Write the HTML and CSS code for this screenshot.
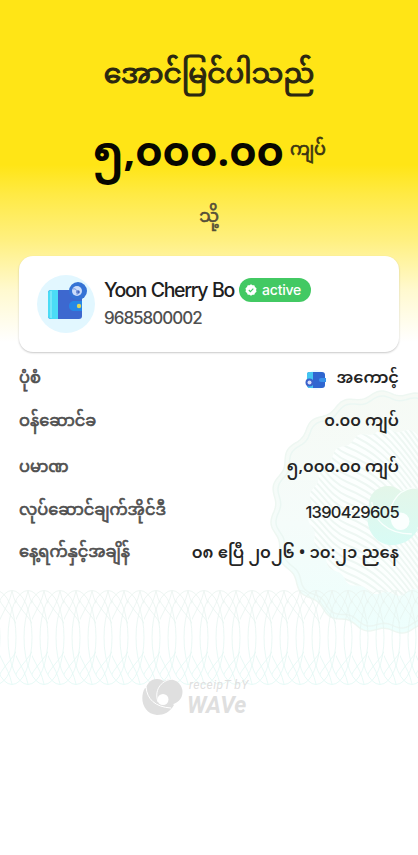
FILE: index.html
```html
<!DOCTYPE html>
<html lang="my">
<head>
<meta charset="utf-8">
<title>Receipt</title>
<link rel="stylesheet" href="styles.css">
</head>
<body>
<main class="receipt">
  <svg class="seal" width="156" height="260" viewBox="0 0 156 260" aria-hidden="true">
    <defs>
      <linearGradient id="sealFill" x1="0" y1="0" x2="0" y2="1"><stop offset="0" stop-color="#f6faf5"/><stop offset=".55" stop-color="#f5fcfa"/><stop offset="1" stop-color="#edfffd"/></linearGradient>
      <linearGradient id="petal" gradientUnits="userSpaceOnUse" x1="0" y1="0" x2="0" y2="37"><stop offset="0" stop-color="#e4f6e9"/><stop offset="1" stop-color="#d8fbf5"/></linearGradient>
      <clipPath id="disc"><path id="discPath"/></clipPath>
    </defs>
    <path id="edge" fill="url(#sealFill)" stroke="#eef7f2" stroke-width="1.5"/>
    <path id="edgeInner" fill="none" stroke="#ebf7f3" stroke-width="1.5"/>
    <g clip-path="url(#disc)"><rect width="156" height="260" fill="#fcfffe"/><g id="waves" fill="none" stroke="#eef7f3" stroke-width="2"></g></g>
    <g transform="translate(105 104) scale(1.6)">
      <g fill="url(#petal)"><circle cx="13" cy="12" r="12"/><path d="M3 10C-3 20 1 36 15 37c7 0 13-3 17-10L20 14Z"/><circle cx="28" cy="14" r="12.500"/></g>
      <path d="M29 1C18 3 12 13 16 24M3 10c1 11 9 20 25 20" fill="none" stroke="#f9fffd" stroke-width=".8"/><circle cx="21" cy="22" r="5.500" fill="#fbfffe"/>
    </g>
  </svg>
  <svg class="lattice" width="418" height="95" aria-hidden="true">
    <defs>
      <linearGradient id="tint" x1="0" y1="0" x2="0" y2="1"><stop offset="0" stop-color="#e9f2ee"/><stop offset="1" stop-color="#e0f8f4"/></linearGradient>
      <pattern id="loops" width="16" height="95" patternUnits="userSpaceOnUse">
        <g fill="none" stroke="url(#tint)" stroke-width=".8">
          <ellipse cx="-20" cy="47.500" rx="20" ry="47"/><ellipse cx="-4" cy="47.500" rx="20" ry="47"/><ellipse cx="12" cy="47.500" rx="20" ry="47"/><ellipse cx="28" cy="47.500" rx="20" ry="47"/>
          <path d="M-4 1C0 20 20 28 20 47.500S0 75 -4 94M12 1C8 20-4 28-4 47.500S8 75 12 94M12 1C16 20 28 28 28 47.500"/>
        </g>
      </pattern>
    </defs>
    <rect width="418" height="95" fill="url(#loops)"/>
  </svg>

  <h1 class="title">အောင်မြင်ပါသည်</h1>
  <div class="total"><span class="sum">၅,၀၀၀.၀၀</span><span class="unit">ကျပ်</span></div>
  <div class="to">သို့</div>

  <section class="card">
    <svg class="avatar" width="58" height="58" viewBox="0 0 58 58" aria-hidden="true">
      <circle cx="29" cy="29" r="29" fill="#e2f7ff"/>
      <rect x="11" y="15" width="34" height="29" rx="3" fill="#3d68cf"/>
      <path d="M14 15h7v29h-7q-3 0-3-3V18q0-3 3-3z" fill="#4bdcf6"/>
      <path d="M14 16v27" stroke="#a1f2fb"/>
      <circle cx="41" cy="16" r="9" fill="#3472d5"/>
      <circle cx="40" cy="16" r="5" fill="#cbdcfa"/><circle cx="41" cy="17" r="1.800" fill="#4265bd"/><path d="M36 14c3-1 5 2 4 6" stroke="#7897df" fill="none"/>
      <path d="M36 26h9v10h-9q-4-1-4-5t4-5z" fill="#2587e7"/>
      <circle cx="42" cy="31" r="2.200" fill="#ddd65a"/>
    </svg>
    <div class="person">
      <div class="name-line"><span class="name">Yoon Cherry Bo</span>
        <span class="badge"><svg width="12" height="12" viewBox="0 0 12 12" aria-hidden="true"><path d="M6 .3 7.500 1.300 9.300 1.300 10 3 11.500 4.200 11.100 6 11.500 7.800 10 9 9.300 10.700 7.500 10.700 6 11.700 4.500 10.700 2.700 10.700 2 9 .5 7.800 .9 6 .5 4.200 2 3 2.700 1.300 4.500 1.300Z" fill="#fff"/><path d="m3.800 6 1.600 1.600L8.300 4.600" fill="none" stroke="#42c963" stroke-width="1.100"/></svg><span class="state">active</span></span>
      </div>
      <div class="phone">9685800002</div>
    </div>
  </section>

  <dl class="details">
    <div class="row r1"><dt>ပုံစံ</dt><dd><svg class="mini" width="22" height="20" viewBox="0 0 22 20" aria-hidden="true"><circle cx="11" cy="10" r="10" fill="#edfaff"/><rect x="2" y="2" width="18" height="16" rx="3" fill="#2f66d0"/><path d="M4 2h4v16H4q-2-1-2-3V4q0-2 2-2z" fill="#43c5f1"/><circle cx="4.500" cy="12.500" r="4" fill="#3c62cb"/><circle cx="4.500" cy="12.500" r="2" fill="#dcdffa"/><path d="M21 8h-5q-2 0-2 2t2 2h5z" fill="#3892ea"/></svg><span>အကောင့်</span></dd></div>
    <div class="row r2"><dt>ဝန်ဆောင်ခ</dt><dd>၀.၀၀ ကျပ်</dd></div>
    <div class="row r3"><dt>ပမာဏ</dt><dd>၅,၀၀၀.၀၀ ကျပ်</dd></div>
    <div class="row r4"><dt>လုပ်ဆောင်ချက်အိုင်ဒီ</dt><dd class="latin">1390429605</dd></div>
    <div class="row r5"><dt>နေ့ရက်နှင့်အချိန်</dt><dd class="date">၀၈ ဧပြီ ၂၀၂၆ • ၁၀:၂၁ ညနေ</dd></div>
  </dl>

  <footer class="brand">
    <svg width="41" height="38" viewBox="0 0 41 38" aria-hidden="true">
      <g fill="#dfdfdf"><circle cx="15" cy="12" r="11"/><path d="M3 10C-3 20 1 36 15 37c7 0 13-3 17-10L20 14Z"/><circle cx="28" cy="14" r="12.500"/></g>
      <path d="M30 1C18 3 12 13 16 24M4 9c1 12 9 20 25 21" fill="none" stroke="#fff"/>
      <circle cx="21" cy="21.500" r="5.500" fill="#fff"/>
    </svg>
    <div class="words"><span class="by">receipT bY</span><span class="wave">WAVe</span></div>
  </footer>
</main>
<script src="script.js"></script>
</body>
</html>
```
FILE: styles.css
```css
* { box-sizing: border-box; }
body { margin: 0; background: #fff; font-family: "Noto Sans Myanmar", "Noto Sans", Inter, sans-serif; color: #242424; }
.receipt { position: relative; height: 855px; overflow: hidden; background: linear-gradient(#ffe516 0, #ffe516 165px, #ffea45 195px, #fff080 240px, #fff9cf 290px, #fff 342px); }
.seal { position: absolute; left: 262px; top: 382px; }
.lattice { position: absolute; left: 0; top: 590px; }
.title, .total, .to, .card, .details, .brand { position: relative; }
.title { margin: 0; padding-top: 55px; height: 124px; text-align: center; font-size: 28px; line-height: 44px; font-weight: 400; -webkit-text-stroke: 1.1px currentColor; color: #2b2710; white-space: nowrap; }
.total { height: 76px; padding-top: 4px; display: flex; justify-content: center; align-items: flex-start; gap: 6px; color: #080700; white-space: nowrap; }
.sum { font-size: 41.200px; line-height: 56px; font-weight: 700; }
.unit { font-size: 17.500px; line-height: 47px; color: #3c3512; font-weight: 400; -webkit-text-stroke: .7px currentColor; }
.to { height: 56px; text-align: center; font-size: 17.500px; line-height: 36px; color: #554f38; -webkit-text-stroke: .6px currentColor; }
.card { margin: 0 19px; height: 96px; border-radius: 14px; background: #fff; box-shadow: 0 1px 2px rgba(0,0,0,.22); display: flex; padding: 19px 18px; gap: 9px; }
.avatar { flex: none; }
.person { font-family: Inter, sans-serif; white-space: nowrap; }
.name-line { display: flex; align-items: center; height: 29px; gap: 5px; }
.name { font-size: 19.500px; letter-spacing: -1.300px; word-spacing: .8px; color: #202020; font-weight: 500; width: 130px; }
.badge { display: flex; align-items: center; gap: 5px; width: 72px; height: 24px; border-radius: 12px; background: #42c963; color: #fff; padding-left: 6px; }
.state { font-size: 14px; font-weight: 500; letter-spacing: -.2px; }
.phone { font-size: 17px; line-height: 29px; letter-spacing: -1px; color: #505050; font-weight: 500; }
.details { margin: 0; padding: 11px 19px 0; height: 326px; }
.row { display: flex; justify-content: space-between; align-items: center; height: 44px; line-height: 30px; white-space: nowrap; }
.r1 { height: 34px; }
.r2 { height: 52px; }
.r3 { height: 40px; }
.r4 { height: 45px; }
.r5 { height: 40px; }
dt { font-size: 16.200px; font-weight: 400; -webkit-text-stroke: .65px currentColor; color: #505050; }
dd { margin: 0; display: flex; align-items: center; gap: 10px; font-size: 16.200px; font-weight: 600; }
.date { font-size: 16.450px; }
.latin { font-family: Inter, sans-serif; font-size: 16.500px; font-weight: 500; letter-spacing: -.73px; }
.brand { display: flex; gap: 4px; padding-left: 142px; color: #dfdfdf; }
.words { font-family: Roboto, sans-serif; font-style: italic; white-space: nowrap; }
.words span { display: block; }
.by { font-size: 12px; line-height: 14px; font-weight: 400; letter-spacing: .5px; padding-left: 2px; }
.wave { font-size: 23px; line-height: 27px; font-weight: 700; letter-spacing: 0; }
```
FILE: script.js
```js
// Builds the scalloped outlines of the seal and the curved lines inside it.
function scallop(radius, depth) {
  const points = [];
  for (let i = 0; i < 360; i++) {
    const a = i * Math.PI / 180;
    const r = radius + depth * Math.cos(20 * a + Math.PI * .6);
    points.push((130 + r * Math.cos(a)).toFixed(1) + ' ' + (130 + r * Math.sin(a)).toFixed(1));
  }
  return 'M' + points.join('L') + 'Z';
}
document.getElementById('edge').setAttribute('d', scallop(119, 2.5));
document.getElementById('edgeInner').setAttribute('d', scallop(114, 2.5));
document.getElementById('discPath').setAttribute('d', scallop(82, 2));
const waves = document.getElementById('waves');
for (let y = -120; y < 300; y += 7) {
  const line = document.createElementNS('http://www.w3.org/2000/svg', 'path');
  line.setAttribute('d', `M20 ${y}c35 2 40 35 65 45s45 25 75 70`);
  waves.appendChild(line);
}
```
